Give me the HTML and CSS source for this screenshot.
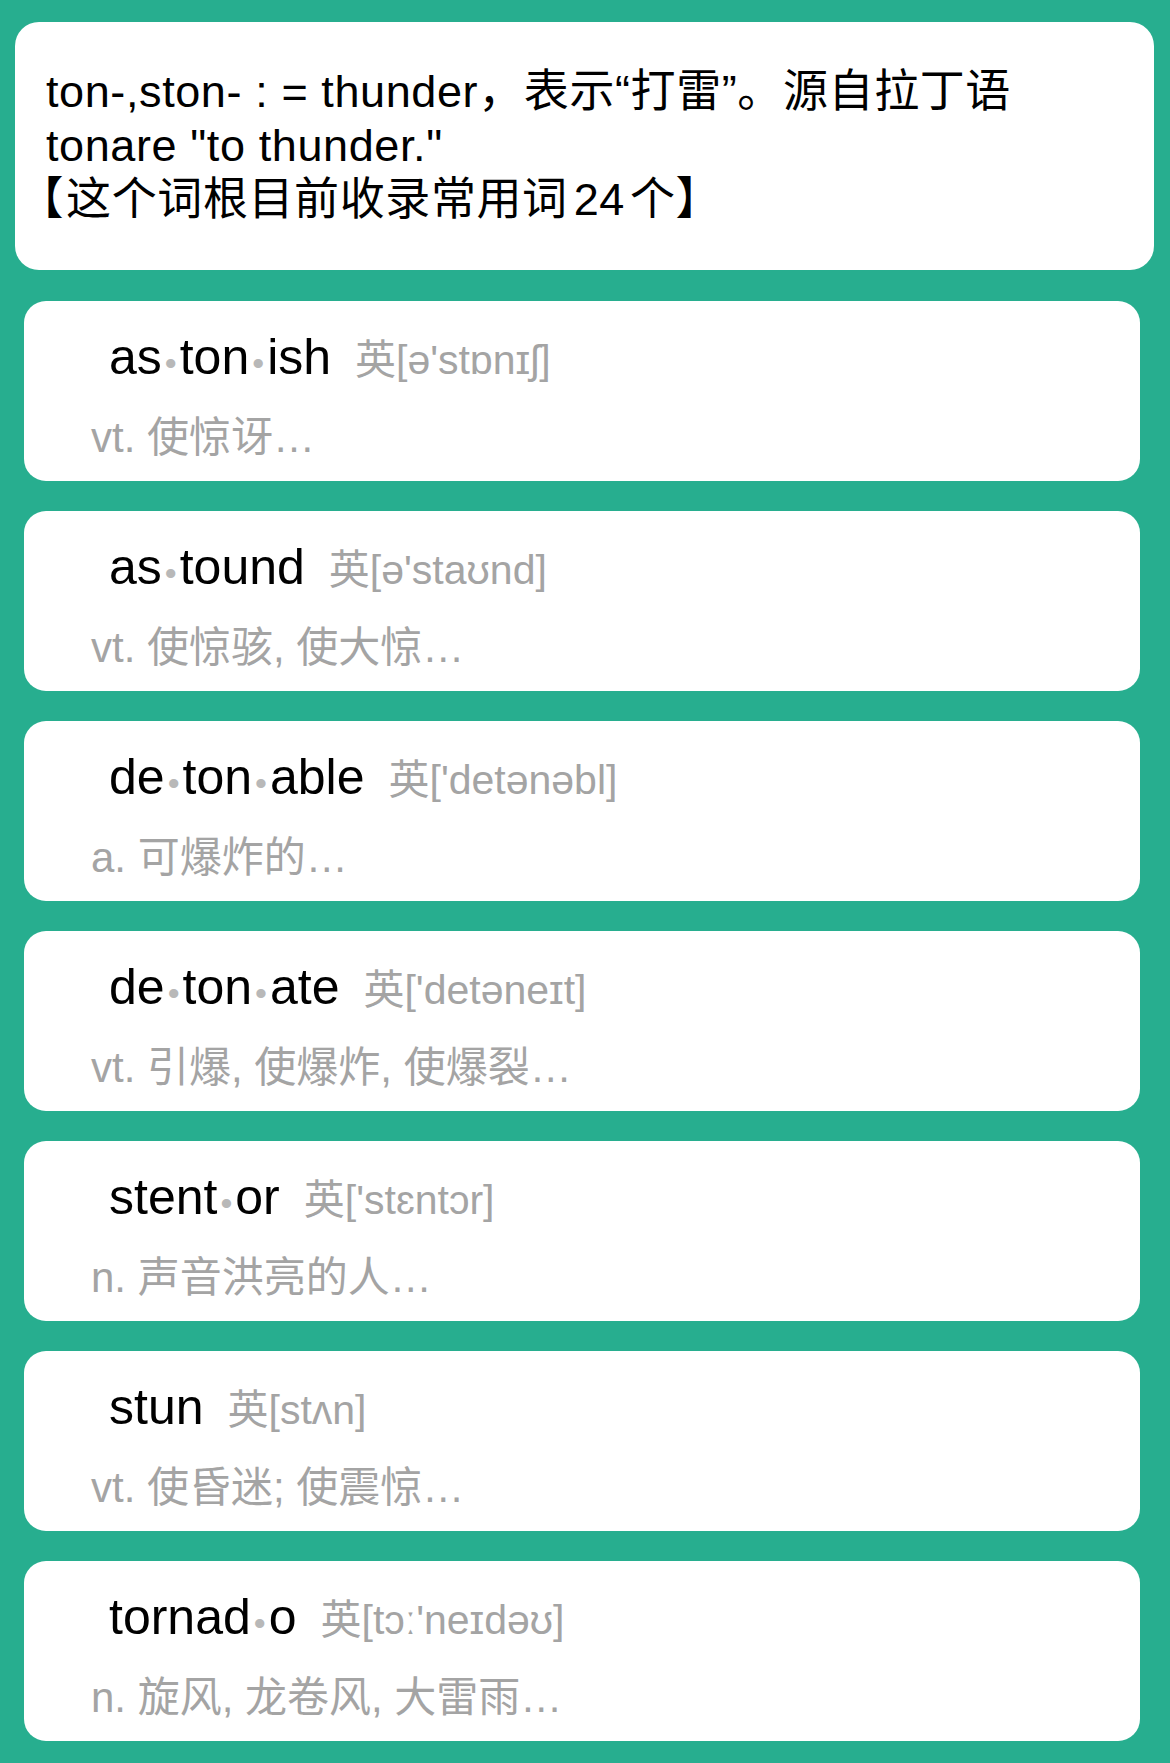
FILE: index.html
```html
<!DOCTYPE html>
<html lang="zh-CN">
<head>
<meta charset="utf-8">
<title>ton- 词根</title>
<link rel="stylesheet" href="styles.css">
</head>
<body>
<main class="page">
  <section class="root-card">
    <p class="root-text">ton-,ston- : = thunder，表示“打雷”。源自拉丁语<br>tonare "to thunder."<br><span class="bracket">【</span>这个词根目前收录常用词<span class="num">24</span>个】</p>
  </section>
  <ul class="word-list">
    <li class="word-card">
      <div class="word-row"><span class="word">as<span class="dot">•</span>ton<span class="dot">•</span>ish</span><span class="phon">英[ə'stɒnɪʃ]</span></div>
      <div class="def">vt. 使惊讶…</div>
    </li>
    <li class="word-card">
      <div class="word-row"><span class="word">as<span class="dot">•</span>tound</span><span class="phon">英[ə'staʊnd]</span></div>
      <div class="def">vt. 使惊骇, 使大惊…</div>
    </li>
    <li class="word-card">
      <div class="word-row"><span class="word">de<span class="dot">•</span>ton<span class="dot">•</span>able</span><span class="phon">英['detənəbl]</span></div>
      <div class="def">a. 可爆炸的…</div>
    </li>
    <li class="word-card">
      <div class="word-row"><span class="word">de<span class="dot">•</span>ton<span class="dot">•</span>ate</span><span class="phon">英['detəneɪt]</span></div>
      <div class="def">vt. 引爆, 使爆炸, 使爆裂…</div>
    </li>
    <li class="word-card">
      <div class="word-row"><span class="word">stent<span class="dot">•</span>or</span><span class="phon">英['stɛntɔr]</span></div>
      <div class="def">n. 声音洪亮的人…</div>
    </li>
    <li class="word-card">
      <div class="word-row"><span class="word">stun</span><span class="phon">英[stʌn]</span></div>
      <div class="def">vt. 使昏迷; 使震惊…</div>
    </li>
    <li class="word-card">
      <div class="word-row"><span class="word">tornad<span class="dot">•</span>o</span><span class="phon">英[tɔː'neɪdəʊ]</span></div>
      <div class="def">n. 旋风, 龙卷风, 大雷雨…</div>
    </li>
  </ul>
</main>
</body>
</html>
```
FILE: styles.css
```css
html, body {
  margin: 0;
  padding: 0;
  background: #27ae8f;
}

body {
  font-family: "Liberation Sans", "Noto Sans CJK SC", sans-serif;
  color: #000;
}

.page {
  display: flex;
  flex-direction: column;
  padding: 22px 16px 22px 15px;
}

.root-card {
  background: #fff;
  border-radius: 24px;
  padding: 43px 31px;
}

.root-text {
  margin: 0;
  font-size: 45px;
  line-height: 54px;
  letter-spacing: 0.6px;
}

.bracket {
  font-feature-settings: "halt";
  margin-left: -5px;
  margin-right: 2px;
}

.num {
  margin: 0 5px 0 6px;
}

.word-list {
  list-style: none;
  margin: 31px 14px 0 9px;
  padding: 0;
  display: flex;
  flex-direction: column;
  gap: 30px;
}

.word-card {
  box-sizing: border-box;
  height: 180px;
  background: #fff;
  border-radius: 22px;
  padding: 26px 0 0 67px;
}

.word-row {
  display: flex;
  align-items: baseline;
  gap: 24px;
  height: 60px;
  padding-left: 18px;
}

.word {
  font-size: 50px;
  line-height: 60px;
  color: #000;
}

.dot {
  display: inline-block;
  font-size: 34px;
  color: #b8b8b8;
  margin: 0 3px;
  vertical-align: -1px;
}

.phon {
  font-size: 41px;
  line-height: 60px;
  color: #a4a4a4;
}

.def {
  margin-top: 26px;
  font-size: 42px;
  line-height: 50px;
  color: #a4a4a4;
}
```
